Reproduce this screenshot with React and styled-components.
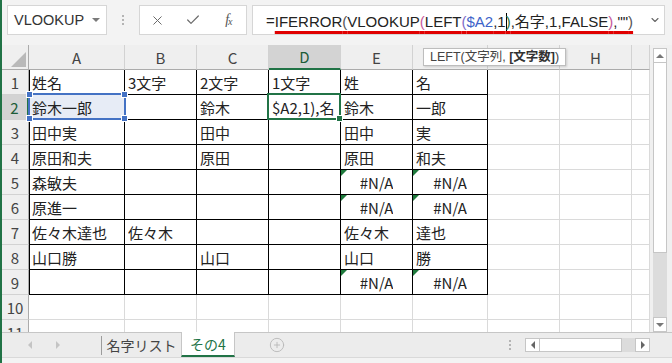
import React from "react";
import styled, { createGlobalStyle } from "styled-components";
import { X, Check, ChevronDown, CirclePlus } from "lucide-react";

const GlobalStyle = createGlobalStyle`
  html, body { margin: 0; padding: 0; background: #fff; }
  body { font-family: "Noto Sans CJK JP", "Liberation Sans", sans-serif; }
`;

const GREEN = "#217346";

const Window = styled.div`
  position: relative;
  width: 672px;
  height: 363px;
  box-sizing: border-box;
  border-left: 2px solid ${GREEN};
  background: #f3f3f3;
  display: flex;
  flex-direction: column;
  overflow: hidden;
`;

const Toolbar = styled.div`
  height: 45px;
  flex: none;
  box-sizing: border-box;
  padding: 5px 7px 10px 5px;
  display: flex;
  align-items: stretch;
`;

const NameBox = styled.div`
  width: 100px;
  box-sizing: border-box;
  background: #fff;
  border: 1px solid #d6d6d6;
  display: flex;
  align-items: center;
  padding-left: 6px;
  font-family: "Liberation Sans", sans-serif;
  font-size: 14.5px;
  color: #333;
`;

const DropArrow = styled.span`
  margin-left: auto;
  margin-right: 6px;
  width: 0;
  height: 0;
  border-left: 4px solid transparent;
  border-right: 4px solid transparent;
  border-top: 4px solid #7a7a7a;
`;

const Grip = styled.div`
  width: 32px;
  display: flex;
  flex-direction: column;
  align-items: center;
  justify-content: center;
  gap: 2px;
  span {
    width: 2px;
    height: 2px;
    background: #b4b4b4;
  }
`;

const ButtonBox = styled.div`
  width: 108px;
  box-sizing: border-box;
  background: #fff;
  border: 1px solid #d6d6d6;
  display: grid;
  grid-template-columns: repeat(3, 1fr);
  align-items: center;
  justify-items: center;
  color: #6b6b6b;
`;

const Fx = styled.span`
  font-family: "Liberation Serif", serif;
  font-style: italic;
  font-size: 14px;
  color: #555;
  letter-spacing: -1px;
  sub {
    font-size: 10px;
    vertical-align: -1px;
  }
`;

const FormulaBox = styled.div`
  flex: 1;
  margin-left: 5px;
  box-sizing: border-box;
  background: #fff;
  border: 1px solid #d6d6d6;
  display: flex;
  align-items: center;
  padding-left: 13px;
  font-family: "Liberation Sans", "Noto Sans CJK JP", sans-serif;
  font-size: 15px;
  color: #222;
  white-space: nowrap;
`;

const Underlined = styled.span`
  text-decoration: underline;
  text-decoration-color: #e00000;
  text-decoration-thickness: 3px;
  text-underline-offset: 4px;
  text-decoration-skip-ink: none;
`;

const Tok = styled.span`
  color: ${(p) => p.$c || "#222"};
`;

const Caret = styled.span`
  display: inline-block;
  width: 1px;
  height: 18px;
  background: #000;
  vertical-align: -4px;
  margin-right: -1px;
`;

const FormulaChevron = styled.span`
  margin-left: auto;
  margin-right: 3px;
  display: flex;
  color: #666;
`;

const Main = styled.div`
  height: 287px;
  flex: none;
  display: flex;
`;

const Sheet = styled.div`
  width: 648px;
  overflow: hidden;
  background: #fff;
  display: grid;
  grid-template-columns: 27px 96px 72px 72px 72px 72px 75px 72px 72px 18px;
  grid-auto-rows: 25px;
  align-content: start;
`;

const Corner = styled.div`
  background: #efefef;
  border-right: 1px solid #ababab;
  border-bottom: 1px solid #ababab;
  display: flex;
  align-items: flex-end;
  justify-content: flex-end;
  padding: 0 2px 2px 0;
`;

const ColHead = styled.div`
  box-sizing: border-box;
  background: ${(p) => (p.$active ? "#d3d3d3" : "#efefef")};
  border-right: 1px solid #d2d2d2;
  border-bottom: ${(p) => (p.$active ? `2px solid ${GREEN}` : "1px solid #ababab")};
  display: flex;
  align-items: center;
  justify-content: center;
  font-size: 15px;
  color: ${(p) => (p.$active ? "#1d5c38" : "#444")};
`;

const RowHead = styled.div`
  box-sizing: border-box;
  background: ${(p) => (p.$active ? "#d3d3d3" : "#efefef")};
  border-right: ${(p) => (p.$active ? `2px solid ${GREEN}` : "1px solid #ababab")};
  border-bottom: 1px solid #d2d2d2;
  display: flex;
  align-items: center;
  justify-content: center;
  font-size: 15px;
  color: ${(p) => (p.$active ? "#1d5c38" : "#444")};
`;

const Cell = styled.div`
  position: relative;
  box-sizing: border-box;
  min-width: 0;
  background: ${(p) => (p.$ref ? "#e7ecf6" : "#fff")};
  border-right: 1px solid ${(p) => (p.$boxed ? "#000" : "#dadada")};
  border-bottom: 1px solid ${(p) => (p.$boxed ? "#000" : "#dadada")};
  box-shadow: ${(p) => (p.$first ? "inset 1px 0 0 #000" : "none")};
  display: flex;
  align-items: center;
  justify-content: ${(p) => (p.$center ? "center" : "flex-start")};
  padding: 0 3px;
  font-size: 15px;
  color: #222;
`;

const CellText = styled.span`
  overflow: hidden;
  white-space: nowrap;
`;

const ErrFlag = styled.span`
  position: absolute;
  top: 0;
  left: 0;
  width: 0;
  height: 0;
  border-top: 6px solid #1e7a3c;
  border-right: 6px solid transparent;
`;

const Outline = styled.span`
  position: absolute;
  z-index: 2;
  top: -2px;
  left: ${(p) => (p.$active ? "-2px" : "-1px")};
  right: ${(p) => (p.$active ? "-1px" : "-2px")};
  bottom: -1px;
  border: 2px solid ${(p) => p.$color};
  pointer-events: none;
`;

const Handle = styled.span`
  position: absolute;
  width: 5px;
  height: 5px;
  background: ${(p) => p.$color};
  border: 1px solid #fff;
  ${(p) => (p.$v === "t" ? "top: -4px;" : "bottom: -4px;")}
  ${(p) => (p.$h === "l" ? "left: -4px;" : "right: -4px;")}
`;

const VScroll = styled.div`
  width: 22px;
  box-sizing: border-box;
  background: #f0f0f0;
  padding: 3px 5px 0 3px;
  display: flex;
  flex-direction: column;
`;

const ScrollBtn = styled.div`
  flex: none;
  width: ${(p) => (p.$w ? `${p.$w}px` : "auto")};
  height: ${(p) => (p.$h ? `${p.$h}px` : "auto")};
  box-sizing: border-box;
  background: #fff;
  border: 1px solid #c6c6c6;
  display: flex;
  align-items: center;
  justify-content: center;
`;

const Tri = styled.span`
  width: 0;
  height: 0;
  ${(p) =>
    p.$dir === "up"
      ? `border-left: 4px solid transparent; border-right: 4px solid transparent; border-bottom: 4px solid ${p.$c};`
      : p.$dir === "down"
      ? `border-left: 4px solid transparent; border-right: 4px solid transparent; border-top: 4px solid ${p.$c};`
      : p.$dir === "left"
      ? `border-top: 4px solid transparent; border-bottom: 4px solid transparent; border-right: 4px solid ${p.$c};`
      : `border-top: 4px solid transparent; border-bottom: 4px solid transparent; border-left: 4px solid ${p.$c};`}
`;

const Thumb = styled.div`
  flex: none;
  height: ${(p) => p.$h}px;
  background: #fff;
  border: 1px solid #c6c6c6;
  border-top: none;
  box-sizing: border-box;
`;

const Track = styled.div`
  flex: 1;
  background: #dcdcdc;
`;

const TabBar = styled.div`
  height: 25px;
  flex: none;
  box-sizing: border-box;
  border-top: 1px solid #c6c6c6;
  background: #ececec;
  display: flex;
  align-items: stretch;
  padding-right: 22px;
`;

const Nav = styled.div`
  width: 99px;
  display: flex;
  align-items: center;
  gap: 24px;
  padding-left: 26px;
  box-sizing: border-box;
`;

const VLine = styled.span`
  width: 1px;
  align-self: center;
  height: 19px;
  background: #9c9c9c;
`;

const Tab = styled.div`
  width: ${(p) => p.$w}px;
  box-sizing: border-box;
  display: flex;
  align-items: center;
  justify-content: center;
  font-size: 14px;
  color: ${(p) => (p.$active ? GREEN : "#444")};
  background: ${(p) => (p.$active ? "#fff" : "transparent")};
  border-left: ${(p) => (p.$active ? "1px solid #c6c6c6" : "none")};
  border-right: ${(p) => (p.$active ? "1px solid #c6c6c6" : "none")};
  border-bottom: ${(p) => (p.$active ? `2px solid ${GREEN}` : "none")};
  margin-top: ${(p) => (p.$active ? "-1px" : "0")};
`;

const AddSheet = styled.div`
  width: 84px;
  display: flex;
  align-items: center;
  justify-content: center;
  color: #b9b9b9;
`;

const Spacer = styled.div`
  flex: 1;
`;

const TabGrip = styled(Grip)`
  width: 16px;
  margin-right: 7px;
`;

const HScroll = styled.div`
  width: 125px;
  display: flex;
  align-items: center;
`;

const HTrack = styled.div`
  flex: 1;
  height: 14px;
  background: #dcdcdc;
  display: flex;
`;

const HThumb = styled.div`
  width: 82px;
  height: 14px;
  box-sizing: border-box;
  background: #fff;
  border: 1px solid #c6c6c6;
  border-left: none;
`;

const StatusStrip = styled.div`
  height: 6px;
  flex: none;
  background: #f3f3f3;
  border-top: 1px solid #d9d9d9;
  box-sizing: border-box;
`;

const Tooltip = styled.div`
  position: absolute;
  left: 421px;
  top: 48px;
  height: 18px;
  box-sizing: border-box;
  padding: 0 6px;
  background: #fff;
  border: 1px solid #bdbdbd;
  box-shadow: 1px 1px 2px rgba(0, 0, 0, 0.15);
  font-family: "Liberation Sans", "Noto Sans CJK JP", sans-serif;
  font-size: 12.5px;
  line-height: 16px;
  color: #444;
  white-space: nowrap;
  b {
    font-weight: bold;
    color: #333;
  }
`;

const letters = ["A", "B", "C", "D", "E", "F", "G", "H", ""];

const data = [
  ["姓名", "3文字", "2文字", "1文字", "姓", "名"],
  ["鈴木一郎", "", "鈴木", "$A2,1),名", "鈴木", "一郎"],
  ["田中実", "", "田中", "", "田中", "実"],
  ["原田和夫", "", "原田", "", "原田", "和夫"],
  ["森敏夫", "", "", "", "#N/A", "#N/A"],
  ["原進一", "", "", "", "#N/A", "#N/A"],
  ["佐々木達也", "佐々木", "", "", "佐々木", "達也"],
  ["山口勝", "", "山口", "", "山口", "勝"],
  ["", "", "", "", "#N/A", "#N/A"],
];

function Corners({ color }) {
  return (
    <>
      <Handle $color={color} $v="t" $h="l" />
      <Handle $color={color} $v="t" $h="r" />
      <Handle $color={color} $v="b" $h="l" />
      <Handle $color={color} $v="b" $h="r" />
    </>
  );
}

function SheetGrid() {
  const rows = [];
  for (let r = 1; r <= 11; r++) {
    rows.push(
      <RowHead key={`h${r}`} $active={r === 2}>
        {r}
      </RowHead>
    );
    for (let c = 0; c < 9; c++) {
      const boxed = r <= 9 && c <= 5;
      const text = boxed ? data[r - 1][c] : "";
      const err = text === "#N/A";
      const isRef = r === 2 && c === 0;
      const isActive = r === 2 && c === 3;
      rows.push(
        <Cell key={`${r}-${c}`} $boxed={boxed} $first={boxed && c === 0} $center={err} $ref={isRef}>
          {err && <ErrFlag />}
          <CellText>{text}</CellText>
          {isRef && (
            <Outline $color="#4472c4">
              <Corners color="#4472c4" />
            </Outline>
          )}
          {isActive && (
            <Outline $color={GREEN} $active>
              <Handle $color={GREEN} $v="b" $h="r" />
            </Outline>
          )}
        </Cell>
      );
    }
  }
  return (
    <Sheet>
      <Corner>
        <svg width="15" height="15" viewBox="0 0 15 15">
          <polygon points="15,0 15,15 0,15" fill="#b9b9b9" />
        </svg>
      </Corner>
      {letters.map((l, i) => (
        <ColHead key={i} $active={l === "D"}>
          {l}
        </ColHead>
      ))}
      {rows}
    </Sheet>
  );
}

export default function App() {
  return (
    <>
      <GlobalStyle />
      <Window>
        <Toolbar>
          <NameBox>
            VLOOKUP
            <DropArrow />
          </NameBox>
          <Grip>
            <span />
            <span />
            <span />
          </Grip>
          <ButtonBox>
            <X size={15} strokeWidth={1.6} />
            <Check size={16} strokeWidth={1.8} />
            <Fx>
              f<sub>x</sub>
            </Fx>
          </ButtonBox>
          <FormulaBox>
            <Tok>=</Tok>
            <Underlined>
              <Tok>IFERROR</Tok>
              <Tok $c="#555">(</Tok>
              <Tok>VLOOKUP</Tok>
              <Tok $c="#c75a9c">(</Tok>
              <Tok>LEFT</Tok>
              <Tok $c="#7d6bc9">(</Tok>
              <Tok $c="#3d63c9">$A2</Tok>
              <Tok>,1</Tok>
              <Caret />
              <Tok $c="#2f7a44">)</Tok>
              <Tok>,名字,1,FALSE</Tok>
              <Tok $c="#c75a9c">)</Tok>
              <Tok>,""</Tok>
              <Tok $c="#555">)</Tok>
            </Underlined>
            <FormulaChevron>
              <ChevronDown size={12} strokeWidth={2.2} />
            </FormulaChevron>
          </FormulaBox>
        </Toolbar>
        <Main>
          <SheetGrid />
          <VScroll>
            <ScrollBtn $h={15}>
              <Tri $dir="up" $c="#777" />
            </ScrollBtn>
            <Thumb $h={190} />
            <Track />
            <ScrollBtn $h={15}>
              <Tri $dir="down" $c="#777" />
            </ScrollBtn>
          </VScroll>
        </Main>
        <TabBar>
          <Nav>
            <Tri $dir="left" $c="#c4c4c4" />
            <Tri $dir="right" $c="#c4c4c4" />
          </Nav>
          <VLine />
          <Tab $w={79}>名字リスト</Tab>
          <Tab $w={54} $active>
            その4
          </Tab>
          <AddSheet>
            <CirclePlus size={16} strokeWidth={1.4} />
          </AddSheet>
          <Spacer />
          <TabGrip>
            <span />
            <span />
            <span />
          </TabGrip>
          <HScroll>
            <ScrollBtn $w={15} $h={14}>
              <Tri $dir="left" $c="#666" />
            </ScrollBtn>
            <HTrack>
              <HThumb />
            </HTrack>
            <ScrollBtn $w={15} $h={14}>
              <Tri $dir="right" $c="#666" />
            </ScrollBtn>
          </HScroll>
        </TabBar>
        <StatusStrip />
        <Tooltip>
          LEFT(文字列, <b>[文字数]</b>)
        </Tooltip>
      </Window>
    </>
  );
}
